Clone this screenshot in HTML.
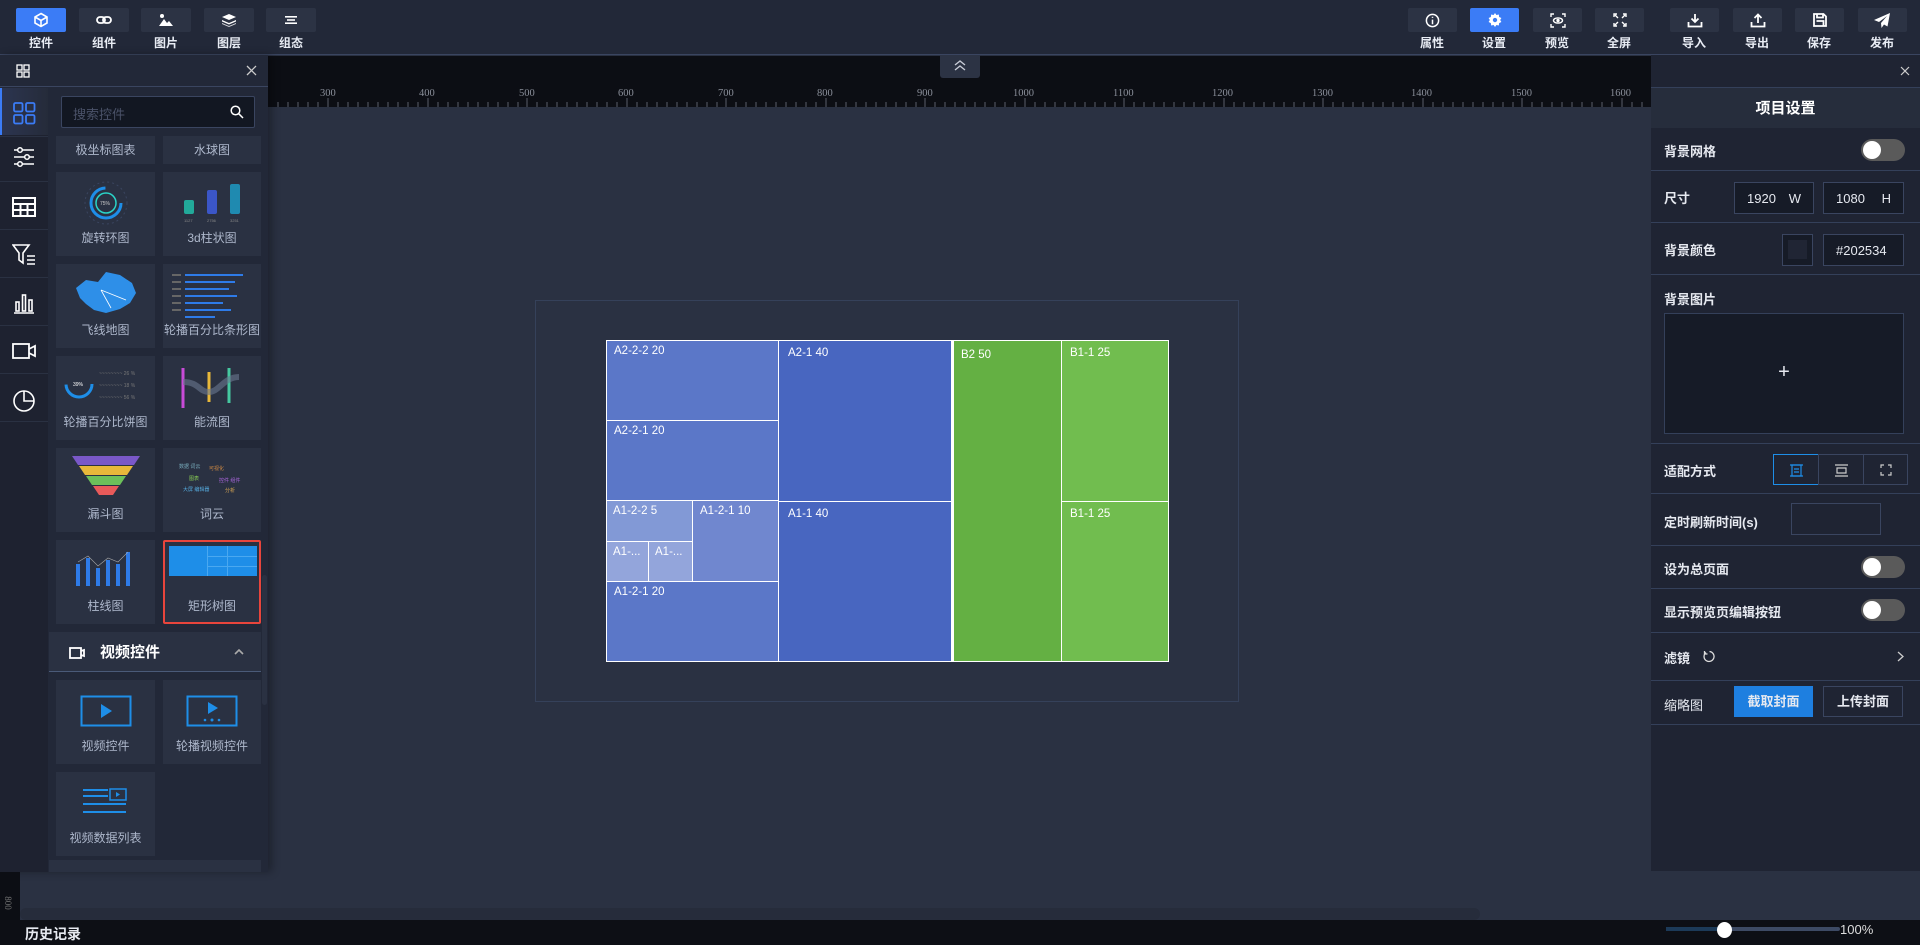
<!DOCTYPE html>
<html><head><meta charset="utf-8"><style>
*{box-sizing:border-box;margin:0;padding:0}
body{width:1920px;height:945px;overflow:hidden;background:#2a3142;font-family:"Liberation Sans","Noto Sans CJK SC",sans-serif;color:#fff;position:relative}
.abs{position:absolute}
.top{left:0;top:0;width:1920px;height:55px;background:#222838;border-bottom:1px solid #3a4560}
.tb{position:absolute;top:8px;width:50px;height:24px;background:#2c3344;border-radius:2px;display:flex;align-items:center;justify-content:center}
.tb.on{background:#3b7cf6}
.tl{position:absolute;top:34px;width:60px;margin-left:-5px;text-align:center;font-size:12px;font-weight:bold;color:#e8ecf4}
.lp{left:0;top:55px;width:268px;height:817px;background:#222838;box-shadow:4px 0 8px rgba(0,0,0,.3)}
.cell{position:absolute;background:#2a3142;color:#aeb8cc;font-size:12px;text-align:center}
.cell span{position:absolute;left:0;right:0;bottom:10px}
.rp{left:1651px;top:55px;width:269px;height:816px;background:#1f2433}
.row{position:absolute;left:0;width:269px;border-bottom:1px solid #34405a;font-size:13px;font-weight:bold;color:#e6e9f0}
.row .lb{position:absolute;left:13px}
.sw{position:absolute;right:15px;width:44px;height:22px;border-radius:11px;background:#5a5a5a}
.sw:before{content:"";position:absolute;left:2px;top:2px;width:18px;height:18px;border-radius:50%;background:#fff}
.inp{position:absolute;border:1px solid #3a4560;background:#161b27;font-size:13px;font-weight:normal;color:#e6e9f0}
.tm{position:absolute;font-size:11.5px;color:#fff;padding:4px 0 0 7px;white-space:nowrap;overflow:hidden;border:1px solid #fff}
</style></head><body>
<div class="abs top">
 <div class="tb on" style="left:16px"><svg width="16" height="16" viewBox="0 0 16 16" fill="none" stroke="#fff" stroke-width="1.6"><path d="M8 1.5 14 5v6l-6 3.5L2 11V5z M2 5l6 3.5L14 5 M8 8.5v6"/></svg></div><div class="tl" style="left:16px">控件</div>
 <div class="tb" style="left:79px"><svg width="16" height="10" viewBox="0 0 16 10" fill="none" stroke="#fff" stroke-width="1.8"><rect x="1" y="2" width="8" height="6" rx="3"/><rect x="7" y="2" width="8" height="6" rx="3"/></svg></div><div class="tl" style="left:79px">组件</div>
 <div class="tb" style="left:141px"><svg width="16" height="14" viewBox="0 0 16 14" fill="#fff"><circle cx="4" cy="3" r="2"/><path d="M1 13l5-7 3 4 2-2 4 5z"/></svg></div><div class="tl" style="left:141px">图片</div>
 <div class="tb" style="left:204px"><svg width="16" height="14" viewBox="0 0 16 14" fill="#fff"><path d="M8 1l7 3-7 3-7-3z"/><path d="M1 7l7 3 7-3v1.5l-7 3-7-3z"/><path d="M1 10l7 3 7-3v1l-7 3-7-3z" opacity=".8"/></svg></div><div class="tl" style="left:204px">图层</div>
 <div class="tb" style="left:266px"><svg width="14" height="10" viewBox="0 0 14 10" fill="#fff"><rect x="1" y="1" width="12" height="1.6"/><rect x="3" y="4.2" width="8" height="1.6"/><rect x="1" y="7.4" width="12" height="1.6"/></svg></div><div class="tl" style="left:266px">组态</div>

 <div class="tb" style="left:1408px;width:49px"><svg width="15" height="15" viewBox="0 0 16 16" fill="none" stroke="#fff" stroke-width="1.6"><circle cx="8" cy="8" r="6.5"/><path d="M8 7v5M8 4v1.2"/></svg></div><div class="tl" style="left:1407px">属性</div>
 <div class="tb on" style="left:1470px;width:49px"><svg width="14" height="14" viewBox="0 0 16 16" fill="#fff"><path d="M8 0l1.6 2.3 2.8-.6.3 2.8 2.6 1.2-1.4 2.3 1.4 2.3-2.6 1.2-.3 2.8-2.8-.6L8 16l-1.6-2.3-2.8.6-.3-2.8L.7 10.3 2.1 8 .7 5.7l2.6-1.2.3-2.8 2.8.6z"/><circle cx="8" cy="8" r="2.5" fill="#3b7cf6"/></svg></div><div class="tl" style="left:1469px">设置</div>
 <div class="tb" style="left:1533px;width:49px"><svg width="16" height="15" viewBox="0 0 16 15" fill="none" stroke="#fff" stroke-width="1.4"><path d="M1 4V1h3M12 1h3v3M15 11v3h-3M4 14H1v-3"/><ellipse cx="8" cy="7.5" rx="4.5" ry="2.6"/><circle cx="8" cy="7.5" r="1" fill="#fff"/></svg></div><div class="tl" style="left:1532px">预览</div>
 <div class="tb" style="left:1595px;width:49px"><svg width="14" height="14" viewBox="0 0 14 14" fill="none" stroke="#fff" stroke-width="1.4"><path d="M1 4V1h3M10 1h3v3M13 10v3h-3M4 13H1v-3M2 2l3 3M12 2l-3 3M12 12l-3-3M2 12l3-3"/></svg></div><div class="tl" style="left:1594px">全屏</div>
 <div class="tb" style="left:1670px;width:49px"><svg width="16" height="15" viewBox="0 0 16 15" fill="none" stroke="#fff" stroke-width="1.8"><path d="M8 1v8M4.5 5.5 8 9l3.5-3.5M1.5 9v4.5h13V9"/></svg></div><div class="tl" style="left:1669px">导入</div>
 <div class="tb" style="left:1733px;width:49px"><svg width="16" height="15" viewBox="0 0 16 15" fill="none" stroke="#fff" stroke-width="1.8"><path d="M8 10V1.5M4.5 5 8 1.5 11.5 5M1.5 9v4.5h13V9"/></svg></div><div class="tl" style="left:1732px">导出</div>
 <div class="tb" style="left:1795px;width:49px"><svg width="14" height="14" viewBox="0 0 14 14" fill="none" stroke="#fff" stroke-width="1.8"><path d="M1 1h9.5L13 3.5V13H1z M4 1v3.5h6V1 M3.5 8h7v5"/></svg></div><div class="tl" style="left:1794px">保存</div>
 <div class="tb" style="left:1858px;width:49px"><svg width="17" height="15" viewBox="0 0 17 15" fill="#fff"><path d="M16 0 0 7l5 2 8-6-6 7 .5 5 2.5-3.5 3.5 2z"/></svg></div><div class="tl" style="left:1857px">发布</div>
</div>

<div class="abs" style="left:268px;top:56px;width:1383px;height:51px;background:#0c0e14"></div>
<svg class="abs" style="left:268px;top:56px" width="1383" height="51">
 <g fill="#8a8f9a" font-family="Liberation Serif" font-size="10.5">
  <text x="52" y="40">300</text><text x="151" y="40">400</text><text x="251" y="40">500</text><text x="350" y="40">600</text><text x="450" y="40">700</text><text x="549" y="40">800</text><text x="649" y="40">900</text><text x="745" y="40">1000</text><text x="845" y="40">1100</text><text x="944" y="40">1200</text><text x="1044" y="40">1300</text><text x="1143" y="40">1400</text><text x="1243" y="40">1500</text><text x="1342" y="40">1600</text>
 </g>
 <path id="tk" d="" stroke="#4a4f5a"/>
 <g stroke="#4a4f5a" stroke-width="1" id="ticks"></g>
 <g stroke="#5a5f6a" stroke-width="1">
  <path d="M60 42v9M160 42v9M259 42v9M359 42v9M458 42v9M558 42v9M657 42v9M757 42v9M856 42v9M956 42v9M1055 42v9M1155 42v9M1254 42v9M1354 42v9"/>
  <path d="M10 46v5M20 46v5M30 46v5M40 46v5M50 46v5M70 46v5M80 46v5M90 46v5M100 46v5M110 46v5M120 46v5M130 46v5M140 46v5M150 46v5M170 46v5M180 46v5M190 46v5M200 46v5M210 46v5M220 46v5M230 46v5M240 46v5M250 46v5M269 46v5M279 46v5M289 46v5M299 46v5M309 46v5M319 46v5M329 46v5M339 46v5M349 46v5M369 46v5M379 46v5M389 46v5M399 46v5M409 46v5M419 46v5M429 46v5M439 46v5M449 46v5M468 46v5M478 46v5M488 46v5M498 46v5M508 46v5M518 46v5M528 46v5M538 46v5M548 46v5M568 46v5M578 46v5M588 46v5M598 46v5M608 46v5M618 46v5M628 46v5M638 46v5M648 46v5M667 46v5M677 46v5M687 46v5M697 46v5M707 46v5M717 46v5M727 46v5M737 46v5M747 46v5M767 46v5M777 46v5M787 46v5M797 46v5M807 46v5M817 46v5M827 46v5M837 46v5M847 46v5M866 46v5M876 46v5M886 46v5M896 46v5M906 46v5M916 46v5M926 46v5M936 46v5M946 46v5M966 46v5M976 46v5M986 46v5M996 46v5M1006 46v5M1016 46v5M1026 46v5M1036 46v5M1046 46v5M1065 46v5M1075 46v5M1085 46v5M1095 46v5M1105 46v5M1115 46v5M1125 46v5M1135 46v5M1145 46v5M1165 46v5M1175 46v5M1185 46v5M1195 46v5M1205 46v5M1215 46v5M1225 46v5M1235 46v5M1245 46v5M1264 46v5M1274 46v5M1284 46v5M1294 46v5M1304 46v5M1314 46v5M1324 46v5M1334 46v5M1344 46v5M1364 46v5M1374 46v5"/>
 </g>
</svg>
<div class="abs" style="left:940px;top:55px;width:40px;height:23px;background:#2c3344;border-radius:0 0 3px 3px"><svg width="40" height="23" viewBox="0 0 40 23" fill="none" stroke="#c8ccd6" stroke-width="1.4"><path d="M15 10l5-4 5 4M15 15l5-4 5 4"/></svg></div>

<div class="abs" style="left:535px;top:300px;width:704px;height:402px;border:1px solid #35415a"></div>
<div class="abs" style="left:606px;top:340px;width:563px;height:322px;background:#fff"></div>
<div class="tm" style="left:606px;top:340px;width:173px;height:81px;background:#5b77c8">A2-2-2 20</div>
<div class="tm" style="left:606px;top:420px;width:173px;height:81px;background:#5b77c8">A2-2-1 20</div>
<div class="tm" style="left:606px;top:500px;width:87px;height:42px;background:#8299d6;padding-left:6px">A1-2-2 5</div>
<div class="tm" style="left:692px;top:500px;width:87px;height:82px;background:#7087cf">A1-2-1 10</div>
<div class="tm" style="left:606px;top:541px;width:43px;height:41px;background:#93a5db;padding-left:6px">A1-...</div>
<div class="tm" style="left:648px;top:541px;width:45px;height:41px;background:#93a5db;padding-left:6px">A1-...</div>
<div class="tm" style="left:606px;top:581px;width:173px;height:81px;background:#5b77c8">A1-2-1 20</div>
<div class="tm" style="left:778px;top:340px;width:174px;height:162px;background:#4866c0;padding:6px 0 0 9px">A2-1 40</div>
<div class="tm" style="left:778px;top:501px;width:174px;height:161px;background:#4866c0;padding:6px 0 0 9px">A1-1 40</div>
<div class="tm" style="left:951px;top:340px;width:111px;height:322px;border-width:1px 1px 1px 3px;background:#64b043;padding:8px 0 0 7px">B2 50</div>
<div class="tm" style="left:1061px;top:340px;width:108px;height:162px;background:#71bd4f;padding:6px 0 0 8px">B1-1 25</div>
<div class="tm" style="left:1061px;top:501px;width:108px;height:161px;background:#71bd4f;padding:6px 0 0 8px">B1-1 25</div>

<div class="abs lp">
 <div class="abs" style="left:0;top:0;width:268px;height:32px;border-bottom:1px solid #3a4560">
  <svg class="abs" style="left:16px;top:9px" width="14" height="14" viewBox="0 0 14 14" fill="none" stroke="#fff" stroke-width="1.3"><rect x="1" y="1" width="5" height="5"/><rect x="8" y="1" width="5" height="5"/><rect x="1" y="8" width="5" height="5"/><rect x="8" y="8" width="5" height="5"/></svg>
  <svg class="abs" style="left:246px;top:10px" width="11" height="11" viewBox="0 0 11 11" stroke="#ccc" stroke-width="1.3"><path d="M1 1l9 9M10 1l-9 9"/></svg>
 </div>
 <div class="abs" style="left:0;top:33px;width:48px;height:784px;background:#1e2230"></div>
 <div class="abs" style="left:0;top:33px;width:48px;height:47px;background:linear-gradient(90deg,#2c3550,#252b3a);border-left:2px solid #3b7cf6"><svg style="margin:14px 0 0 11px" width="23" height="23" viewBox="0 0 23 23" fill="none" stroke="#3b7cf6" stroke-width="1.8"><rect x="1" y="1" width="8.5" height="8.5" rx="1.5"/><rect x="13" y="1" width="8.5" height="8.5" rx="1.5"/><rect x="1" y="13" width="8.5" height="8.5" rx="1.5"/><rect x="13" y="13" width="8.5" height="8.5" rx="1.5"/></svg></div>
 <svg class="abs" style="left:13px;top:91px" width="22" height="22" viewBox="0 0 22 22" fill="none" stroke="#fff" stroke-width="1.5"><path d="M1 4h20M1 11h20M1 18h20"/><circle cx="7" cy="4" r="2.3" fill="#1e2230"/><circle cx="14" cy="11" r="2.3" fill="#1e2230"/><circle cx="7" cy="18" r="2.3" fill="#1e2230"/></svg>
 <svg class="abs" style="left:12px;top:142px" width="24" height="20" viewBox="0 0 24 20" fill="none" stroke="#fff" stroke-width="2"><rect x="1" y="1" width="22" height="18"/><path d="M1 7h22M1 13h22M8.5 7v12M15.5 7v12"/></svg>
 <svg class="abs" style="left:12px;top:188px" width="24" height="24" viewBox="0 0 24 24" fill="none" stroke="#fff" stroke-width="1.6"><path d="M1 2h16l-6 8v10l-4-3v-7z M15 13h8M15 17h8M15 21h8"/></svg>
 <svg class="abs" style="left:13px;top:237px" width="22" height="22" viewBox="0 0 22 22" fill="none" stroke="#fff" stroke-width="1.6"><path d="M1 21h20"/><rect x="3" y="10" width="3" height="9"/><rect x="9.5" y="3" width="3" height="16"/><rect x="16" y="8" width="3" height="11"/></svg>
 <svg class="abs" style="left:12px;top:287px" width="24" height="18" viewBox="0 0 24 18" fill="none" stroke="#fff" stroke-width="1.8"><rect x="1" y="2" width="16" height="14"/><path d="M17 7l6-3v10l-6-3"/></svg>
 <svg class="abs" style="left:12px;top:333px" width="24" height="24" viewBox="0 0 24 24" fill="none" stroke="#fff" stroke-width="1.6"><circle cx="12" cy="13" r="10"/><path d="M12 3v10h10"/></svg>
 <div class="abs" style="left:0;top:81px;width:48px;height:1px;background:#2a3142"></div>
 <div class="abs" style="left:0;top:126px;width:48px;height:1px;background:#2a3142"></div>
 <div class="abs" style="left:0;top:174px;width:48px;height:1px;background:#2a3142"></div>
 <div class="abs" style="left:0;top:222px;width:48px;height:1px;background:#2a3142"></div>
 <div class="abs" style="left:0;top:270px;width:48px;height:1px;background:#2a3142"></div>
 <div class="abs" style="left:0;top:318px;width:48px;height:1px;background:#2a3142"></div>
 <div class="abs" style="left:0;top:366px;width:48px;height:1px;background:#2a3142"></div>

 <div class="abs" style="left:61px;top:41px;width:194px;height:32px;background:#121722;border:1px solid #3a4560;border-radius:2px;font-size:13px;color:#4a5268;padding:7px 0 0 11px">搜索控件
  <svg class="abs" style="right:10px;top:8px" width="14" height="14" viewBox="0 0 14 14" fill="none" stroke="#fff" stroke-width="1.5"><circle cx="5.5" cy="5.5" r="4.3"/><path d="M8.7 8.7 13 13"/></svg></div>
 <div class="cell" style="left:56px;top:81px;width:99px;height:28px"><span style="bottom:6px">极坐标图表</span></div>
 <div class="cell" style="left:163px;top:81px;width:98px;height:28px"><span style="bottom:6px">水球图</span></div>

 <div class="cell" style="left:56px;top:117px;width:99px;height:84px"><svg style="margin-top:8px" width="46" height="46" viewBox="0 0 46 46" fill="none"><circle cx="23" cy="23" r="21" stroke="#3a4560" stroke-dasharray="2 3"/><circle cx="23" cy="23" r="15" stroke="#1e8ee8" stroke-width="3" stroke-dasharray="70 25"/><circle cx="23" cy="23" r="10" stroke="#2ad4c8" stroke-width="1.5"/><text x="17" y="25" font-size="5" fill="#ccc">75%</text></svg><span>旋转环图</span></div>
 <div class="cell" style="left:163px;top:117px;width:98px;height:84px"><svg style="margin-top:10px" width="80" height="46" viewBox="0 0 80 46"><rect x="12" y="18" width="10" height="14" rx="2" fill="#22a99a"/><rect x="35" y="8" width="10" height="24" rx="2" fill="#3b56c8"/><rect x="58" y="2" width="10" height="30" rx="2" fill="#1f8ab0"/><g fill="#888" font-size="4"><text x="12" y="40">1127</text><text x="35" y="40">2756</text><text x="58" y="40">3251</text></g></svg><span>3d柱状图</span></div>

 <div class="cell" style="left:56px;top:209px;width:99px;height:84px"><svg style="margin-top:6px" width="70" height="48" viewBox="0 0 70 48"><path d="M5 18l10-8 12 2 8-10 14 3 12 8 4 10-6 10-10 6-14 4-12-3-8-6-6-6z" fill="#2e8fe8"/><path d="M30 20l25 10M30 20l10 18" stroke="#fff" stroke-width=".8"/></svg><span>飞线地图</span></div>
 <div class="cell" style="left:163px;top:209px;width:98px;height:84px"><svg style="margin-top:6px" width="86" height="50" viewBox="0 0 86 50"><g fill="#2e7be8"><rect x="16" y="4" width="58" height="2"/><rect x="16" y="11" width="50" height="2"/><rect x="16" y="18" width="44" height="2"/><rect x="16" y="25" width="52" height="2"/><rect x="16" y="32" width="38" height="2"/><rect x="16" y="39" width="46" height="2"/><rect x="16" y="46" width="30" height="2"/></g><g fill="#666"><rect x="3" y="4" width="9" height="2"/><rect x="3" y="11" width="9" height="2"/><rect x="3" y="18" width="9" height="2"/><rect x="3" y="25" width="9" height="2"/><rect x="3" y="32" width="9" height="2"/><rect x="3" y="39" width="9" height="2"/></g></svg><span>轮播百分比条形图</span></div>

 <div class="cell" style="left:56px;top:301px;width:99px;height:84px"><svg style="margin-top:8px" width="86" height="40" viewBox="0 0 86 40"><circle cx="16" cy="20" r="13" fill="none" stroke="#1e8ee8" stroke-width="3" stroke-dasharray="40 45"/><text x="10" y="22" font-size="5" fill="#fff">39%</text><g fill="#777" font-size="5"><text x="36" y="11">~~~~~~~~ 26 %</text><text x="36" y="23">~~~~~~~~ 18 %</text><text x="36" y="35">~~~~~~~~ 56 %</text></g></svg><span>轮播百分比饼图</span></div>
 <div class="cell" style="left:163px;top:301px;width:98px;height:84px"><svg style="margin-top:6px" width="86" height="50" viewBox="0 0 86 50"><g stroke-width="3"><path d="M14 6v40" stroke="#c84bd8"/><path d="M40 10v30" stroke="#e8b83a"/><path d="M60 6v35" stroke="#45c8a0"/></g><path d="M14 20C30 20 30 30 40 30S55 15 70 15" stroke="#6a7890" stroke-width="6" fill="none" opacity=".6"/></svg><span>能流图</span></div>

 <div class="cell" style="left:56px;top:393px;width:99px;height:84px"><svg style="margin-top:6px" width="76" height="50" viewBox="0 0 76 50"><path d="M4 2h68l-6 9H10z" fill="#7a58c8"/><path d="M11 12h54l-6 9H17z" fill="#e8b83a"/><path d="M18 22h40l-6 9H24z" fill="#6cc05a"/><path d="M25 32h26l-6 9H31z" fill="#e85a5a"/></svg><span>漏斗图</span></div>
 <div class="cell" style="left:163px;top:393px;width:98px;height:84px"><svg style="margin-top:10px" width="86" height="40" viewBox="0 0 86 40"><g font-size="5"><text x="10" y="10" fill="#7ab">数据 词云</text><text x="40" y="12" fill="#c84">可视化</text><text x="20" y="22" fill="#8c5">图表</text><text x="50" y="24" fill="#a6d">控件 组件</text><text x="14" y="33" fill="#5ad">大屏 编辑器</text><text x="56" y="34" fill="#da5">分析</text></g></svg><span>词云</span></div>

 <div class="cell" style="left:56px;top:485px;width:99px;height:84px"><svg style="margin-top:8px" width="80" height="40" viewBox="0 0 80 40"><g fill="#2e7be8"><rect x="10" y="16" width="4" height="22"/><rect x="20" y="10" width="4" height="28"/><rect x="30" y="20" width="4" height="18"/><rect x="40" y="12" width="4" height="26"/><rect x="50" y="16" width="4" height="22"/><rect x="60" y="4" width="4" height="34"/></g><path d="M12 14l10-6 10 10 10-8 10 4 10-10" stroke="#aaa" stroke-width=".6" fill="none"/></svg><span>柱线图</span></div>
 <div class="cell" style="left:163px;top:485px;width:98px;height:84px;border:2px solid #e8453c;border-radius:2px"><div style="position:absolute;left:4px;top:4px;width:88px;height:30px;background:#1e8ee8"></div><div style="position:absolute;left:42px;top:4px;width:1px;height:30px;background:#4aa8f0"></div><div style="position:absolute;left:42px;top:14px;width:50px;height:1px;background:#4aa8f0"></div><div style="position:absolute;left:42px;top:24px;width:50px;height:1px;background:#4aa8f0"></div><div style="position:absolute;left:62px;top:4px;width:1px;height:30px;background:#4aa8f0"></div><span style="bottom:8px">矩形树图</span></div>

 <div class="abs" style="left:49px;top:577px;width:212px;height:40px;background:#2a3142;border-bottom:1px solid #4a5a78"></div>
 <svg class="abs" style="left:69px;top:592px" width="16" height="12" viewBox="0 0 16 12" fill="none" stroke="#fff" stroke-width="1.8"><rect x="1" y="1" width="11" height="10"/><path d="M12 4l3-1v6l-3-1"/></svg>
 <div class="abs" style="left:100px;top:586px;font-size:15px;font-weight:bold;color:#fff">视频控件</div>
 <svg class="abs" style="left:234px;top:594px" width="10" height="6" viewBox="0 0 10 6" fill="none" stroke="#aaa" stroke-width="1.6"><path d="M1 5l4-4 4 4"/></svg>

 <div class="cell" style="left:56px;top:625px;width:99px;height:84px"><svg style="margin-top:15px" width="52" height="32" viewBox="0 0 52 32" fill="none"><rect x="1.5" y="1.5" width="49" height="29" stroke="#1e8ee8" stroke-width="2"/><path d="M21 9l11 7-11 7z" fill="#1e8ee8"/></svg><span>视频控件</span></div>
 <div class="cell" style="left:163px;top:625px;width:98px;height:84px"><svg style="margin-top:15px" width="52" height="32" viewBox="0 0 52 32" fill="none"><rect x="1.5" y="1.5" width="49" height="29" stroke="#1e8ee8" stroke-width="2"/><path d="M22 7l10 6-10 6z" fill="#1e8ee8"/><g fill="#1e8ee8"><circle cx="19" cy="25" r="1.3"/><circle cx="26" cy="25" r="1.5"/><circle cx="33" cy="25" r="1.3"/></g></svg><span>轮播视频控件</span></div>
 <div class="cell" style="left:56px;top:717px;width:99px;height:84px"><svg style="margin-top:16px" width="46" height="26" viewBox="0 0 46 26" fill="none"><g stroke="#1e8ee8" stroke-width="2"><path d="M0 2h25M0 8h25M0 16h43M0 24h43"/><rect x="27" y="1" width="16" height="11" stroke-width="1.5"/></g><path d="M33 4l4 2.5-4 2.5z" fill="#1e8ee8"/></svg><span>视频数据列表</span></div>
 <div class="abs" style="left:49px;top:805px;width:212px;height:12px;background:#2a3142"></div>
 <div class="abs" style="left:262px;top:520px;width:5px;height:130px;background:#2a3142;border-radius:3px"></div>
</div>

<div class="abs" style="left:0;top:872px;width:20px;height:50px;background:#0c0e14"></div>
<div class="abs" style="left:1px;top:898px;font-size:9px;color:#777;font-family:'Liberation Serif';transform:rotate(90deg)">800</div>
<div class="abs" style="left:20px;top:908px;width:1460px;height:12px;background:#262c3b;border-radius:6px"></div>
<div class="abs" style="left:0;top:920px;width:1920px;height:25px;background:#0d0f15"></div>
<div class="abs" style="left:25px;top:924px;font-size:14px;font-weight:bold;color:#e6e9f0">历史记录</div>
<div class="abs" style="left:1666px;top:927px;width:174px;height:4px;background:#3d4a64;border-radius:2px"></div>
<div class="abs" style="left:1666px;top:927px;width:58px;height:4px;background:#1c3a58"></div>
<div class="abs" style="left:1717px;top:922px;width:15px;height:16px;background:#fff;border-radius:50%"></div>
<div class="abs" style="left:1840px;top:922px;font-size:13px;color:#ddd">100%</div>
<div class="abs" style="left:1651px;top:871px;width:253px;height:39px;background:#2a3142"></div>

<div class="abs rp">
 <svg class="abs" style="left:249px;top:11px" width="10" height="10" viewBox="0 0 10 10" stroke="#ccc" stroke-width="1.2"><path d="M1 1l8 8M9 1l-8 8"/></svg>
 <div class="abs" style="left:0;top:32px;width:269px;height:41px;background:#262d3c;border-top:1px solid #34405a;text-align:center;font-size:15px;font-weight:bold;line-height:41px">项目设置</div>
 <div class="row" style="top:73px;height:43px"><span class="lb" style="top:13px">背景网格</span><div class="sw" style="top:11px"></div></div>
 <div class="row" style="top:116px;height:52px"><span class="lb" style="top:17px">尺寸</span>
  <div class="inp" style="left:83px;top:11px;width:80px;height:32px;padding:8px 0 0 12px">1920<span style="position:absolute;right:12px">W</span></div>
  <div class="inp" style="left:172px;top:11px;width:81px;height:32px;padding:8px 0 0 12px">1080<span style="position:absolute;right:12px">H</span></div></div>
 <div class="row" style="top:168px;height:52px"><span class="lb" style="top:17px">背景颜色</span>
  <div class="inp" style="left:131px;top:11px;width:31px;height:32px"><div style="margin:5px;width:19px;height:19px;background:#202534"></div></div>
  <div class="inp" style="left:172px;top:11px;width:81px;height:32px;padding:8px 0 0 12px">#202534</div></div>
 <div class="row" style="top:220px;height:169px"><span class="lb" style="top:14px">背景图片</span>
  <div class="abs" style="left:13px;top:38px;width:240px;height:121px;background:#161b27;border:1px solid #34405a;text-align:center;line-height:117px;font-size:20px;font-weight:normal">+</div></div>
 <div class="row" style="top:389px;height:50px"><span class="lb" style="top:17px">适配方式</span>
  <div class="inp" style="left:122px;top:10px;width:46px;height:31px;border-color:#1e8ee8;background:none"><svg style="margin:9px 0 0 16px" width="13" height="13" viewBox="0 0 13 13" fill="none" stroke="#1e8ee8" stroke-width="1.2"><rect x="2" y="1" width="9" height="11"/><path d="M0 1h13M0 12h13M4 5h5M4 8h5"/></svg></div>
  <div class="inp" style="left:167px;top:10px;width:46px;height:31px;background:none"><svg style="margin:9px 0 0 16px" width="13" height="13" viewBox="0 0 13 13" fill="none" stroke="#ccc" stroke-width="1.2"><path d="M0 1h13M0 12h13M2 4h9v5H2z"/></svg></div>
  <div class="inp" style="left:212px;top:10px;width:45px;height:31px;background:none"><svg style="margin:9px 0 0 16px" width="12" height="12" viewBox="0 0 12 12" fill="none" stroke="#ccc" stroke-width="1.2"><path d="M1 4V1h3M8 1h3v3M11 8v3H8M4 11H1V8"/></svg></div></div>
 <div class="row" style="top:439px;height:52px"><span class="lb" style="top:18px">定时刷新时间(s)</span><div class="inp" style="left:140px;top:9px;width:90px;height:32px;background:none"></div></div>
 <div class="row" style="top:491px;height:43px"><span class="lb" style="top:13px">设为总页面</span><div class="sw" style="top:10px"></div></div>
 <div class="row" style="top:534px;height:44px"><span class="lb" style="top:13px">显示预览页编辑按钮</span><div class="sw" style="top:10px"></div></div>
 <div class="row" style="top:578px;height:48px"><span class="lb" style="top:15px">滤镜</span>
  <svg class="abs" style="left:52px;top:17px" width="13" height="13" viewBox="0 0 13 13" fill="none" stroke="#ddd" stroke-width="1.3"><path d="M3 2.5A5 5 0 1 0 6.5 1.5M1.5 1v3h3"/></svg>
  <svg class="abs" style="left:246px;top:18px" width="7" height="11" viewBox="0 0 7 11" fill="none" stroke="#ccc" stroke-width="1.3"><path d="M1 1l5 4.5L1 10"/></svg></div>
 <div class="row" style="top:626px;height:44px"><span class="lb" style="top:14px;font-weight:normal">缩略图</span>
  <div class="abs" style="left:83px;top:5px;width:79px;height:31px;background:#1e7fe0;text-align:center;line-height:31px;font-size:13px">截取封面</div>
  <div class="inp" style="left:172px;top:5px;width:80px;height:31px;text-align:center;line-height:29px;font-weight:bold;background:none">上传封面</div></div>
</div>
</body></html>
